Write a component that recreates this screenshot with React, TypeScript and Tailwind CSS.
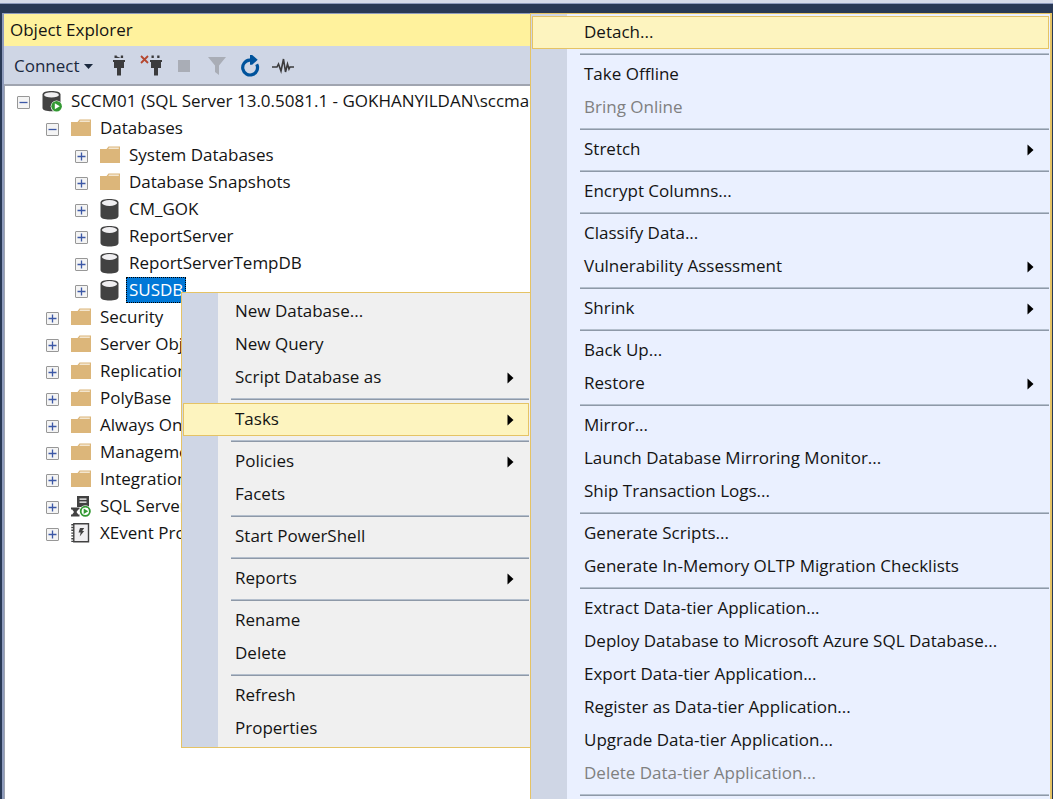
import React from "react";

type IconName = "server" | "folder" | "database" | "agent" | "xevent";

interface TreeNode {
  label: string;
  icon: IconName;
  open?: boolean;
  selected?: boolean;
  children?: TreeNode[];
}

interface MenuEntry {
  label: string;
  submenu?: boolean;
  active?: boolean;
  disabled?: boolean;
}

const tree: TreeNode[] = [
  {
    label: "SCCM01 (SQL Server 13.0.5081.1 - GOKHANYILDAN\\sccmadmin)",
    icon: "server",
    open: true,
    children: [
      {
        label: "Databases",
        icon: "folder",
        open: true,
        children: [
          { label: "System Databases", icon: "folder" },
          { label: "Database Snapshots", icon: "folder" },
          { label: "CM_GOK", icon: "database" },
          { label: "ReportServer", icon: "database" },
          { label: "ReportServerTempDB", icon: "database" },
          { label: "SUSDB", icon: "database", selected: true },
        ],
      },
      { label: "Security", icon: "folder" },
      { label: "Server Objects", icon: "folder" },
      { label: "Replication", icon: "folder" },
      { label: "PolyBase", icon: "folder" },
      { label: "Always On", icon: "folder" },
      { label: "Management", icon: "folder" },
      { label: "Integration", icon: "folder" },
      { label: "SQL Server", icon: "agent" },
      { label: "XEvent Profiler", icon: "xevent" },
    ],
  },
];

const databaseMenu: MenuEntry[][] = [
  [{ label: "New Database..." }, { label: "New Query" }, { label: "Script Database as", submenu: true }],
  [{ label: "Tasks", submenu: true, active: true }],
  [{ label: "Policies", submenu: true }, { label: "Facets" }],
  [{ label: "Start PowerShell" }],
  [{ label: "Reports", submenu: true }],
  [{ label: "Rename" }, { label: "Delete" }],
  [{ label: "Refresh" }, { label: "Properties" }],
];

const tasksMenu: MenuEntry[][] = [
  [{ label: "Detach...", active: true }],
  [{ label: "Take Offline" }, { label: "Bring Online", disabled: true }],
  [{ label: "Stretch", submenu: true }],
  [{ label: "Encrypt Columns..." }],
  [{ label: "Classify Data..." }, { label: "Vulnerability Assessment", submenu: true }],
  [{ label: "Shrink", submenu: true }],
  [{ label: "Back Up..." }, { label: "Restore", submenu: true }],
  [{ label: "Mirror..." }, { label: "Launch Database Mirroring Monitor..." }, { label: "Ship Transaction Logs..." }],
  [{ label: "Generate Scripts..." }, { label: "Generate In-Memory OLTP Migration Checklists" }],
  [
    { label: "Extract Data-tier Application..." },
    { label: "Deploy Database to Microsoft Azure SQL Database..." },
    { label: "Export Data-tier Application..." },
    { label: "Register as Data-tier Application..." },
    { label: "Upgrade Data-tier Application..." },
    { label: "Delete Data-tier Application...", disabled: true },
  ],
  [],
];

function NodeIcon({ name }: { name: IconName }) {
  const common = { width: 20, height: 22, viewBox: "0 0 20 22", "aria-hidden": true, className: "shrink-0" } as const;
  switch (name) {
    case "folder":
      return (
        <svg {...common}>
          <path d="M0 5h6.5l2-2.5H20V19H0z" fill="#dcb67a" />
          <path d="M8.3 5l.9-1.4h9.6V5z" fill="#f3e6d0" />
        </svg>
      );
    case "database":
      return (
        <svg {...common}>
          <path d="M0.500 4.500C0.500 2 4.500 1 9.500 1s9 1 9 3.500V18c0 2.500-4 3.500-9 3.500s-9-1-9-3.500z" fill="#424242" />
          <ellipse cx="9.500" cy="5" rx="7.600" ry="2.900" fill="#f0eff1" />
        </svg>
      );
    case "server":
      return (
        <svg {...common}>
          <path d="M0.500 4.500C0.500 2 4.500 1 9.500 1s9 1 9 3.500V18c0 2.300-4 3.300-9 3.300s-9-1-9-3.300z" fill="#424242" />
          <ellipse cx="9.500" cy="4.900" rx="7.400" ry="2.700" fill="#f0eff1" />
          <circle cx="14.600" cy="16.300" r="5.900" fill="#fff" />
          <circle cx="14.600" cy="16.300" r="5.300" fill="#339933" />
          <path d="M12.800 13.300l5 3-5 3z" fill="#fff" />
        </svg>
      );
    case "agent":
      return (
        <svg {...common}>
          <path d="M6 1h12v11H6z" fill="#424242" />
          <path d="M8.500 4.200h7M8.500 7.200h7" stroke="#fff" strokeWidth="1.300" />
          <path d="M0 12.500h8.500v2H7.300L5.500 17l1.800 2.500h1.200v2H0v-2h1.200L3 17l-1.800-2.500H0z" fill="#424242" />
          <circle cx="14.300" cy="16.300" r="6" fill="#fff" />
          <circle cx="14.300" cy="16.300" r="4.600" fill="#fff" stroke="#339933" strokeWidth="1.800" />
          <path d="M12.700 13.500l4.500 2.800-4.500 2.800z" fill="#339933" />
        </svg>
      );
    case "xevent":
      return (
        <svg {...common}>
          <path d="M2.800 1.800h14.700v18H2.800z" fill="#f0eff1" stroke="#424242" strokeWidth="1.400" />
          <path d="M1.600 2v18" stroke="#424242" strokeWidth="2.600" strokeDasharray="1.400 1.400" />
          <path d="M9 6h4.200l-2 3h2l-4.500 5.500 1-4H7.500z" fill="#424242" />
        </svg>
      );
  }
}

function Expander({ open, label }: { open?: boolean; label: string }) {
  return (
    <button
      type="button"
      aria-label={(open ? "Collapse " : "Expand ") + label}
      className="mt-1 flex size-[13px] shrink-0 items-center justify-center rounded-[1px] border border-[#979797] bg-[#f4f4f4] p-0"
    >
      <svg width="9" height="9" viewBox="0 0 9 9" aria-hidden="true">
        <path d={open ? "M0.500 4.500h8" : "M0.500 4.500h8M4.500 0.500v8"} stroke="#3c58a6" strokeWidth="1.300" />
      </svg>
    </button>
  );
}

function TreeItems({ nodes, root }: { nodes: TreeNode[]; root?: boolean }) {
  return (
    <ul role={root ? "tree" : "group"} aria-label={root ? "Object Explorer" : undefined} className={root ? "pl-3" : "pl-[29px]"}>
      {nodes.map((node) => (
        <li key={node.label} role="treeitem" aria-expanded={!!node.open} aria-selected={!!node.selected}>
          <div className="flex h-[27px] items-center whitespace-nowrap">
            <Expander open={node.open} label={node.label} />
            <span className="ml-3 flex">
              <NodeIcon name={node.icon} />
            </span>
            <span
              className={
                node.selected
                  ? "ml-1.5 border border-dotted border-black bg-[#0078d7] px-0.5 leading-6 text-white"
                  : "ml-[9px] leading-6"
              }
            >
              {node.label}
            </span>
          </div>
          {node.children && <TreeItems nodes={node.children} />}
        </li>
      ))}
    </ul>
  );
}

function Menu({ groups, label }: { groups: MenuEntry[][]; label: string }) {
  return (
    <div role="menu" aria-label={label} className="flex flex-col">
      {groups.map((group, index) => (
        <React.Fragment key={index}>
          {index > 0 && (
            <div role="separator" className="flex h-[9px] items-center pl-12">
              <div className="h-0.5 flex-1 border-t border-[#b4bfcd] bg-[#8e99a8]" />
            </div>
          )}
          {group.map((entry) => (
            <button
              key={entry.label}
              type="button"
              role="menuitem"
              disabled={entry.disabled}
              aria-haspopup={entry.submenu ? "menu" : undefined}
              className={
                entry.active
                  ? "flex h-[33px] items-center justify-between border border-[#e5c365] bg-[#fdf4bf] pr-3.5 pl-[51px] text-left whitespace-nowrap"
                  : "flex h-[33px] items-center justify-between border border-transparent pr-3.5 pl-[51px] text-left whitespace-nowrap disabled:text-[#808080]"
              }
            >
              <span className="pb-0.5">{entry.label}</span>
              {entry.submenu && (
                <svg width="7" height="12" viewBox="0 0 7 12" aria-hidden="true">
                  <path d="M0.500 0.500L6.500 6l-6 5.500z" fill="#000" />
                </svg>
              )}
            </button>
          ))}
        </React.Fragment>
      ))}
    </div>
  );
}

function Toolbar() {
  return (
    <div role="toolbar" aria-label="Object Explorer toolbar" className="flex h-10 items-center border-b-2 border-[#a0a5b0] bg-[#cfd6e5] pt-0.5 pl-2.5">
      <button type="button" className="flex items-center gap-1 text-[#1b293e]">
        Connect
        <svg width="9" height="5" viewBox="0 0 9 5" aria-hidden="true">
          <path d="M0 0h9L4.500 5z" fill="#1b293e" />
        </svg>
      </button>
      <button type="button" aria-label="Connect Object Explorer" className="ml-[19px]">
        <svg width="14" height="22" viewBox="0 0 14 22" aria-hidden="true">
          <path d="M2.500 0.500h2.300V3h4V0.500h2.300V3h-2.300M2.500 0.500h2.300V3H2.500zM8.800 0.500h2.300V3H8.800zM1 5h12v2h-1v6H9v7.500H5V13H2V7H1z" fill="#3b3b3d" />
        </svg>
      </button>
      <button type="button" aria-label="Disconnect" className="ml-3.5">
        <svg width="22" height="22" viewBox="0 0 22 22" aria-hidden="true">
          <path d="M1 1l7 7M8 1L1 8" stroke="#b5472f" strokeWidth="1.800" />
          <path d="M11.500 0.500h2.300V3h-2.300zM17.200 0.500h2.300V3h-2.300zM10 5h12v2h-1v6h-3v7.500h-4V13h-3V7h-1z" fill="#3b3b3d" />
        </svg>
      </button>
      <button type="button" aria-label="Stop" disabled className="ml-[15px]">
        <svg width="14" height="14" viewBox="0 0 14 14" aria-hidden="true">
          <path d="M1 1h12v12H1z" fill="#a9adb6" />
        </svg>
      </button>
      <button type="button" aria-label="Filter" disabled className="ml-[17px]">
        <svg width="18" height="20" viewBox="0 0 18 20" aria-hidden="true">
          <path d="M0 1h18l-7 8.500V19l-4-3V9.500z" fill="#a9adb6" />
        </svg>
      </button>
      <button type="button" aria-label="Refresh" className="ml-3.5">
        <svg width="20" height="22" viewBox="0 0 20 22" aria-hidden="true">
          <path d="M16.700 9.200A7.400 7.400 0 1 1 9.500 5.200H12" fill="none" stroke="#00539c" strokeWidth="3.200" />
          <path d="M10 0h2.200l5.500 4.800-5.500 5H10z" fill="#00539c" />
        </svg>
      </button>
      <button type="button" aria-label="Activity Monitor" className="ml-3">
        <svg width="22" height="18" viewBox="0 0 22 18" aria-hidden="true">
          <path d="M0 10h5l1.500-3L9 14l2.500-12 2 13 2-8 1.500 5 1-2h4" fill="none" stroke="#3b3b3d" strokeWidth="1.600" />
        </svg>
      </button>
    </div>
  );
}

export default function App() {
  return (
    <div className="relative flex h-screen flex-col overflow-hidden bg-[#293955] font-['Open_Sans','Noto_Sans',sans-serif] text-[17px] text-[#141414]">
      <div className="h-1 shrink-0 border-b border-[#8e9bbc] bg-[#d6dbe9]" />
      <main className="mt-[9px] mr-1 ml-0.5 flex flex-1 flex-col border-t border-l-2 border-[#8e9bbc] bg-white">
        <h1 className="h-8 bg-[#fff29d] pl-1.5 leading-8">Object Explorer</h1>
        <Toolbar />
        <div className="flex-1 border-l border-[#a0a5b0] pt-px">
          <TreeItems nodes={tree} root />
        </div>
      </main>

      <div className="absolute top-[292px] left-[181px] w-[350px] border border-[#e5c365] bg-[linear-gradient(to_right,#cfd6e5_36px,#f0f0f0_36px)] bg-no-repeat py-0.5 pr-px pl-px">
        <Menu groups={databaseMenu} label="Database" />
      </div>
      <div className="absolute top-[13px] right-px left-[530px] border border-r-2 border-[#e5c365] bg-[linear-gradient(to_right,#cfd6e5_36px,#eaf0ff_36px)] bg-no-repeat py-0.5 pr-px pl-px">
        <Menu groups={tasksMenu} label="Tasks" />
      </div>
    </div>
  );
}
